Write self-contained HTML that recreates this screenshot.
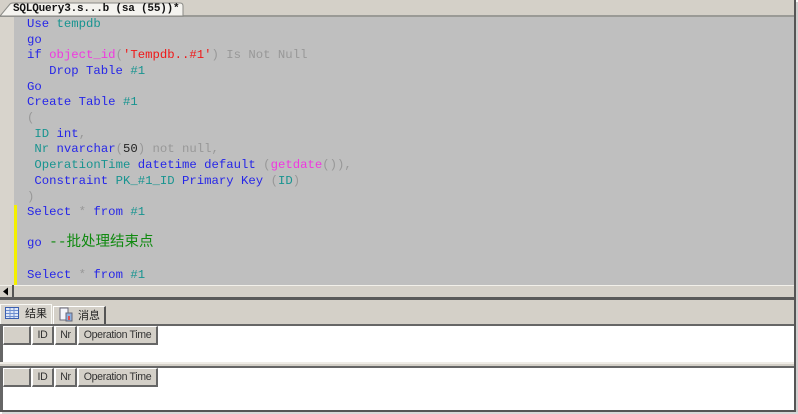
<!DOCTYPE html>
<html><head><meta charset="utf-8"><style>
html,body{margin:0;padding:0;background:#fff}
#r{position:relative;width:798px;height:414px;overflow:hidden;background:#fff}
#r div,#r span.a{position:absolute}
.l{left:27px;font:12.3px/16px "Liberation Mono","Noto Sans CJK SC",monospace;white-space:pre;color:#989898;filter:blur(.3px)}
.b{color:#2626e8}.t{color:#189490}.m{color:#f038e0}.r{color:#f01818}.k{color:#222}.g{color:#108a10}.y{color:#989898}
.h{background:#d4d0c8;border-right:2px solid #666;border-bottom:2px solid #666;border-top:1px solid #fff;border-left:1px solid #fff;box-sizing:border-box;height:19px;font:10.6px/17px "Liberation Sans",sans-serif;color:#333;text-align:center;letter-spacing:-.35px;white-space:pre}
.s{font:11px/16px "Liberation Sans","Noto Sans CJK SC",sans-serif;color:#222}
</style></head><body><div id="r">
<div style="left:0;top:0;width:794px;height:16px;background:#d4d0c8"></div>
<div style="left:0;top:15px;width:794px;height:2px;background:#9a9a96"></div>
<svg style="position:absolute;left:0;top:0" width="190" height="17"><path d="M0 16 L10 4 Q11 3 13 3 L180 3 Q183 3 183 6 L183 16Z" fill="#f4f3ef" stroke="#8a8a86"/></svg>
<div style="left:13px;top:1px;font:bold 11px/16px 'Liberation Mono',monospace;color:#111;white-space:pre;letter-spacing:-.2px">SQLQuery3.s...b (sa (55))*</div>
<div style="left:14px;top:17px;width:780px;height:268px;background:#bfbfbf"></div>
<div style="left:0;top:17px;width:14px;height:268px;background:#d8d4cc"></div>
<div style="left:14px;top:205px;width:3px;height:80px;background:#f4f000"></div>
<div class="l b" style="top:16px">Use <span class="t">tempdb</span></div>
<div class="l b" style="top:32px">go</div>
<div class="l b" style="top:47px">if <span class="m">object_id</span><span class="y">(</span><span class="r">'Tempdb..#1'</span><span class="y">) Is Not Null</span></div>
<div class="l b" style="top:63px">   Drop Table <span class="t">#1</span></div>
<div class="l b" style="top:79px">Go</div>
<div class="l b" style="top:94px">Create Table <span class="t">#1</span></div>
<div class="l" style="top:110px">(</div>
<div class="l" style="top:126px"> <span class="t">ID</span> <span class="b">int</span>,</div>
<div class="l" style="top:141px"> <span class="t">Nr</span> <span class="b">nvarchar</span>(<span class="k">50</span>) not null,</div>
<div class="l" style="top:157px"> <span class="t">OperationTime</span> <span class="b">datetime default</span> (<span class="m">getdate</span>()),</div>
<div class="l" style="top:173px"> <span class="b">Constraint</span> <span class="t">PK_#1_ID</span> <span class="b">Primary Key</span> (<span class="t">ID</span>)</div>
<div class="l" style="top:189px">)</div>
<div class="l b" style="top:204px">Select <span class="y">*</span> from <span class="t">#1</span></div>
<div class="l b" style="top:235px">go <span class="g" style="font-size:14.5px">--批处理结束点</span></div>
<div class="l b" style="top:267px">Select <span class="y">*</span> from <span class="t">#1</span></div>
<div style="left:0;top:285px;width:794px;height:12px;background:#d4d0c8;border-top:1px solid #f2f0ea;box-sizing:border-box"></div>
<div style="left:12px;top:285px;width:2px;height:12px;background:#555"></div>
<svg style="position:absolute;left:2px;top:287px" width="8" height="9"><path d="M1 4.5 L6 0.5 V8.5Z" fill="#000"/></svg>
<div style="left:0;top:297px;width:794px;height:3px;background:#5a5a5a"></div>
<div style="left:0;top:300px;width:794px;height:25px;background:#d4d0c8"></div>
<div style="left:0;top:304px;width:52px;height:21px;background:#d8d5ce;border:1px solid #f8f8f4;border-bottom:0;box-sizing:border-box"></div>
<div style="left:53px;top:306px;width:53px;height:18px;background:#d4d0c8;border-top:1px solid #fff;border-left:1px solid #fff;border-right:2px solid #555;box-sizing:border-box"></div>
<svg style="position:absolute;left:5px;top:307px" width="15" height="13"><rect x=".5" y=".5" width="13" height="11" fill="#dfe8f8" stroke="#3a5fb0"/><path d="M1 3.5H13M1 6.5H13M1 9.5H13M5 1V11M9 1V11" stroke="#6f8fd0"/></svg>
<svg style="position:absolute;left:59px;top:307px" width="14" height="15"><rect x="1" y="1" width="8" height="12" fill="#f4f4fa" stroke="#667"/><rect x="7" y="6" width="6" height="8" fill="#8fb0e0" stroke="#667"/><rect x="9" y="9" width="2" height="4" fill="#e05050"/></svg>
<div class="s" style="left:25px;top:306px">结果</div>
<div class="s" style="left:78px;top:308px">消息</div>
<div style="left:0;top:324px;width:794px;height:2px;background:#666"></div>
<div style="left:0;top:326px;width:3px;height:36px;background:#666"></div>
<div style="left:3px;top:326px;width:791px;height:36px;background:#fff"></div>
<div class="h" style="left:3px;top:326px;width:28px"></div>
<div class="h" style="left:32px;top:326px;width:22px">ID</div>
<div class="h" style="left:55px;top:326px;width:22px">Nr</div>
<div class="h" style="left:78px;top:326px;width:80px">Operation Time</div>
<div style="left:0;top:362px;width:794px;height:5px;background:#d4d0c8;border-top:2px solid #efece6;box-sizing:border-box"></div>
<div style="left:0;top:366px;width:794px;height:2px;background:#666"></div>
<div style="left:0;top:368px;width:3px;height:43px;background:#666"></div>
<div style="left:3px;top:368px;width:791px;height:42px;background:#fff"></div>
<div class="h" style="left:3px;top:368px;width:28px"></div>
<div class="h" style="left:32px;top:368px;width:22px">ID</div>
<div class="h" style="left:55px;top:368px;width:22px">Nr</div>
<div class="h" style="left:78px;top:368px;width:80px">Operation Time</div>
<div style="left:0;top:410px;width:795px;height:2px;background:#555"></div>
<div style="left:794px;top:0;width:2px;height:412px;background:#555"></div>
<div style="left:796px;top:2px;width:2px;height:412px;background:#cfcfcf"></div>
<div style="left:2px;top:412px;width:796px;height:2px;background:#d8d8d8"></div>
</div></body></html>
